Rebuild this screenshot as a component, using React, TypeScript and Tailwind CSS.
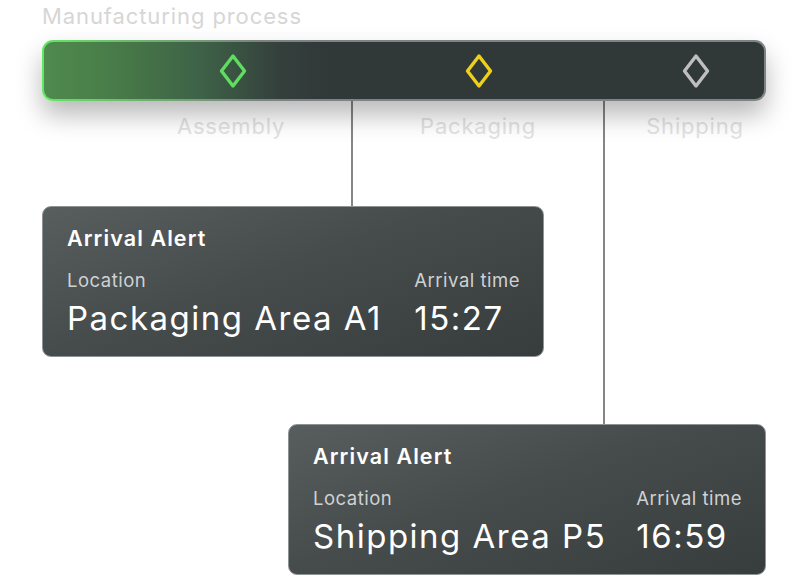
import React from "react";

const Diamond = ({ color }: { color: string }) => (
  <svg width="30" height="36" viewBox="0 0 30 36" fill="none">
    <path d="M15 3 L26.5 18 L15 33 L3.5 18 Z" stroke={color} strokeWidth="3.4" strokeLinejoin="round" />
  </svg>
);

const Card = ({ location, time, className }: { location: string; time: string; className: string }) => (
  <div
    className={`h-[151px] rounded-[9px] border border-[#8e9393] bg-[linear-gradient(160deg,#585d5d_0%,#464b4b_45%,#373c3c_100%)] pl-[24px] pr-[23px] pt-[17px] text-white ${className}`}
  >
    <p className="text-[21.5px] font-semibold leading-[28px] tracking-[1.1px]">Arrival Alert</p>
    <div className="mt-[17px] flex justify-between">
      <div>
        <p className="text-[18.5px] leading-[22px] tracking-[0.5px] text-[#cfd2d2]">Location</p>
        <p className="mt-[7px] text-[33px] leading-[40px] tracking-[1.5px]">{location}</p>
      </div>
      <div>
        <p className="text-[18.5px] leading-[22px] tracking-[0.5px] text-[#cfd2d2]">Arrival time</p>
        <p className="mt-[7px] text-[33px] leading-[40px] tracking-[1.5px]">{time}</p>
      </div>
    </div>
  </div>
);

export default function App() {
  return (
    <div className="relative h-[577px] w-[807px] overflow-hidden bg-white font-['Inter',sans-serif]">
      <div className="pl-[42px] pr-[41px]">
        <p className="pt-[1px] text-[22px] leading-[30px] tracking-[0.9px] text-[#d6d6d6]">Manufacturing process</p>
        <div className="relative z-10 mt-[9px] rounded-[11px] bg-[linear-gradient(90deg,#62e862_0%,#6fb86f_12%,#7d8282_30%,#7f8383_100%)] p-[2px] shadow-[0_14px_26px_rgba(0,0,0,0.28)]">
          <div className="flex h-[57px] items-center rounded-[9px] bg-[linear-gradient(90deg,#4f8a4f_0%,#487b48_10%,#3e6147_22%,#343f3c_33%,#313838_40%,#313838_100%)]">
            <div className="ml-[165px] flex w-[48px] justify-center">
              <Diamond color="#5fdd5f" />
            </div>
            <div className="ml-[198px] flex w-[48px] justify-center">
              <Diamond color="#ecd01c" />
            </div>
            <div className="ml-[169px] flex w-[48px] justify-center">
              <Diamond color="#bfbfbf" />
            </div>
          </div>
        </div>
        <div className="flex h-[48px] items-center pt-[2px] text-[22px] tracking-[0.8px] text-[#e2e2e2]">
          <div className="ml-[129px] w-[120px] text-center">Assembly</div>
          <div className="ml-[127px] w-[120px] text-center">Packaging</div>
          <div className="ml-[97px] w-[120px] text-center">Shipping</div>
        </div>
        <Card location="Packaging Area A1" time="15:27" className="mt-[57px] w-[502px]" />
        <Card location="Shipping Area P5" time="16:59" className="ml-[246px] mt-[67px] w-[478px]" />
      </div>
      <div className="absolute left-[351px] top-[100px] h-[106px] w-[1.5px] bg-[#858585]" />
      <div className="absolute left-[603px] top-[100px] h-[324px] w-[1.5px] bg-[#858585]" />
    </div>
  );
}
